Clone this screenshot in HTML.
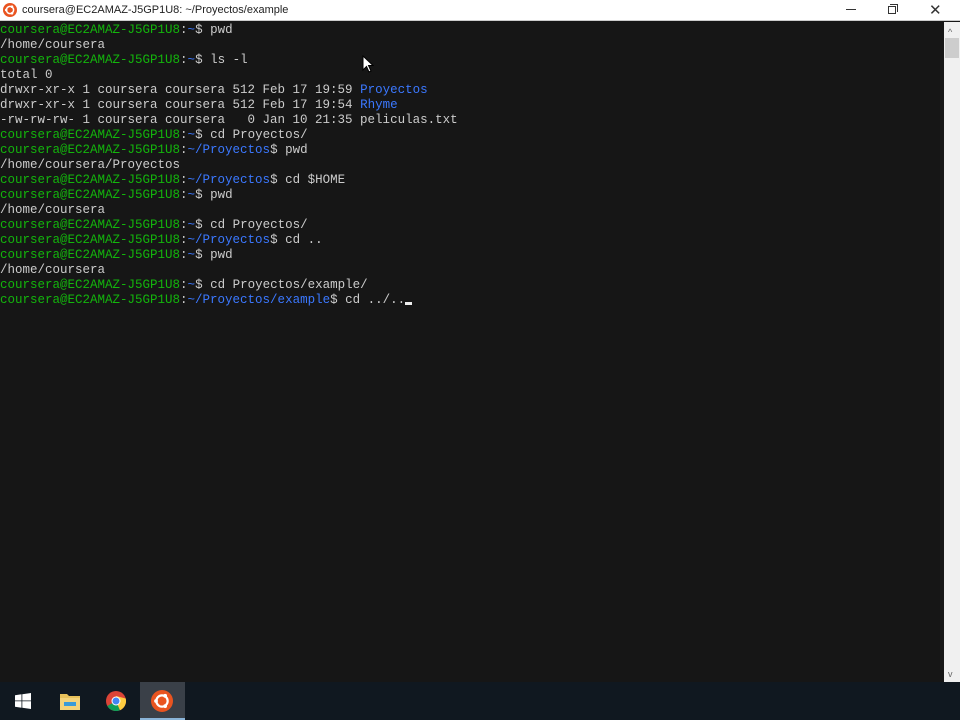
<!DOCTYPE html>
<html><head><meta charset="utf-8"><style>
*{margin:0;padding:0;box-sizing:border-box}
body{width:960px;height:720px;overflow:hidden;background:#161616;position:relative;font-family:"Liberation Sans",sans-serif}
#title{position:absolute;left:0;top:0;width:960px;height:21px;background:#fff;border-bottom:1px solid #ccc}
#title .t{position:absolute;left:22px;top:4px;font-size:11px;color:#222}
#term{position:absolute;left:0;top:22px;width:944px;height:660px;background:#161616;font-family:"Liberation Mono",monospace;font-size:12.5px;line-height:15px;color:#cccccc;white-space:pre;padding-top:1px}
.g{color:#13b50c}.b{color:#3b78ff}
#sb{position:absolute;left:944px;top:22px;width:16px;height:660px;background:#f0f0f0}
#task{position:absolute;left:0;top:682px;width:960px;height:38px;background:#101820}
</style></head><body>
<div id="title">
<svg style="position:absolute;left:3px;top:3px" width="14" height="14" viewBox="0 0 14 14"><circle cx="7" cy="7" r="7" fill="#e95420"/><circle cx="7" cy="7" r="3.6" fill="none" stroke="#fff" stroke-width="1.5"/><circle cx="3.2" cy="7" r="1.3" fill="#fff"/><circle cx="9" cy="3.7" r="1.3" fill="#fff"/><circle cx="9" cy="10.3" r="1.3" fill="#fff"/></svg>
<div class="t">coursera@EC2AMAZ-J5GP1U8: ~/Proyectos/example</div>
<div style="position:absolute;left:846px;top:9px;width:10px;height:1px;background:#333"></div>
<div style="position:absolute;left:888px;top:6px;width:8px;height:8px;border:1px solid #333"></div>
<div style="position:absolute;left:890px;top:4px;width:8px;height:8px;border-top:1px solid #333;border-right:1px solid #333"></div>
<div style="position:absolute;left:929px;top:1px;font-size:15px;color:#333">✕</div>
</div>
<div id="term"><span class="g">coursera@EC2AMAZ-J5GP1U8</span>:<span class="b">~</span>$ pwd
/home/coursera
<span class="g">coursera@EC2AMAZ-J5GP1U8</span>:<span class="b">~</span>$ ls -l
total 0
drwxr-xr-x 1 coursera coursera 512 Feb 17 19:59 <span class="b">Proyectos</span>
drwxr-xr-x 1 coursera coursera 512 Feb 17 19:54 <span class="b">Rhyme</span>
-rw-rw-rw- 1 coursera coursera   0 Jan 10 21:35 peliculas.txt
<span class="g">coursera@EC2AMAZ-J5GP1U8</span>:<span class="b">~</span>$ cd Proyectos/
<span class="g">coursera@EC2AMAZ-J5GP1U8</span>:<span class="b">~/Proyectos</span>$ pwd
/home/coursera/Proyectos
<span class="g">coursera@EC2AMAZ-J5GP1U8</span>:<span class="b">~/Proyectos</span>$ cd $HOME
<span class="g">coursera@EC2AMAZ-J5GP1U8</span>:<span class="b">~</span>$ pwd
/home/coursera
<span class="g">coursera@EC2AMAZ-J5GP1U8</span>:<span class="b">~</span>$ cd Proyectos/
<span class="g">coursera@EC2AMAZ-J5GP1U8</span>:<span class="b">~/Proyectos</span>$ cd ..
<span class="g">coursera@EC2AMAZ-J5GP1U8</span>:<span class="b">~</span>$ pwd
/home/coursera
<span class="g">coursera@EC2AMAZ-J5GP1U8</span>:<span class="b">~</span>$ cd Proyectos/example/
<span class="g">coursera@EC2AMAZ-J5GP1U8</span>:<span class="b">~/Proyectos/example</span>$ cd ../..<span style="display:inline-block;width:7px;height:3px;background:#eee;vertical-align:-2px"></span></div>
<svg style="position:absolute;left:362px;top:55px" width="12" height="18" viewBox="0 0 12 18"><path d="M1 1 L1 15 L4.5 11.5 L7 17 L9 16 L6.5 10.5 L11 10.5 Z" fill="#fff" stroke="#000" stroke-width="1"/></svg>
<div id="sb">
<div style="position:absolute;left:4px;top:5px;font-size:9px;color:#666">^</div>
<div style="position:absolute;left:1px;top:16px;width:14px;height:20px;background:#cdcdcd"></div>
<div style="position:absolute;left:4px;top:647px;font-size:9px;color:#666">v</div>
</div>
<div id="task">
<svg style="position:absolute;left:15px;top:11px" width="16" height="16" viewBox="0 0 16 16"><path d="M0 2.2L6.5 1.3V7.5H0ZM7.3 1.2L16 0V7.5H7.3ZM0 8.3H6.5V14.7L0 13.8ZM7.3 8.3H16V16L7.3 14.8Z" fill="#fff"/></svg>
<svg style="position:absolute;left:60px;top:10px" width="20" height="18" viewBox="0 0 20 18"><path d="M0 2h7l2 2h11v14H0Z" fill="#e8c15a"/><rect x="0" y="6" width="20" height="12" fill="#f4d37a"/><rect x="4" y="10" width="12" height="4" fill="#3a9bd9"/></svg>
<svg style="position:absolute;left:106px;top:9px" width="20" height="20" viewBox="0 0 20 20"><circle cx="10" cy="10" r="10" fill="#db4437"/><path d="M10 10 L1.3 15 A10 10 0 0 0 14 19.2Z" fill="#0f9d58"/><path d="M10 10 L14 19.2 A10 10 0 0 0 19.7 7.5 L10 5Z" fill="#ffcd40"/><circle cx="10" cy="10" r="4.5" fill="#fff"/><circle cx="10" cy="10" r="3.5" fill="#4285f4"/></svg>
<div style="position:absolute;left:140px;top:0;width:45px;height:38px;background:#3a4048"></div>
<div style="position:absolute;left:140px;top:36px;width:45px;height:2px;background:#8ab4d8"></div>
<svg style="position:absolute;left:151px;top:8px" width="22" height="22" viewBox="0 0 14 14"><circle cx="7" cy="7" r="7" fill="#e95420"/><circle cx="7" cy="7" r="3.6" fill="none" stroke="#fff" stroke-width="1.4"/><circle cx="3.2" cy="7" r="1.2" fill="#fff"/><circle cx="9" cy="3.7" r="1.2" fill="#fff"/><circle cx="9" cy="10.3" r="1.2" fill="#fff"/></svg>
</div>
</body></html>
